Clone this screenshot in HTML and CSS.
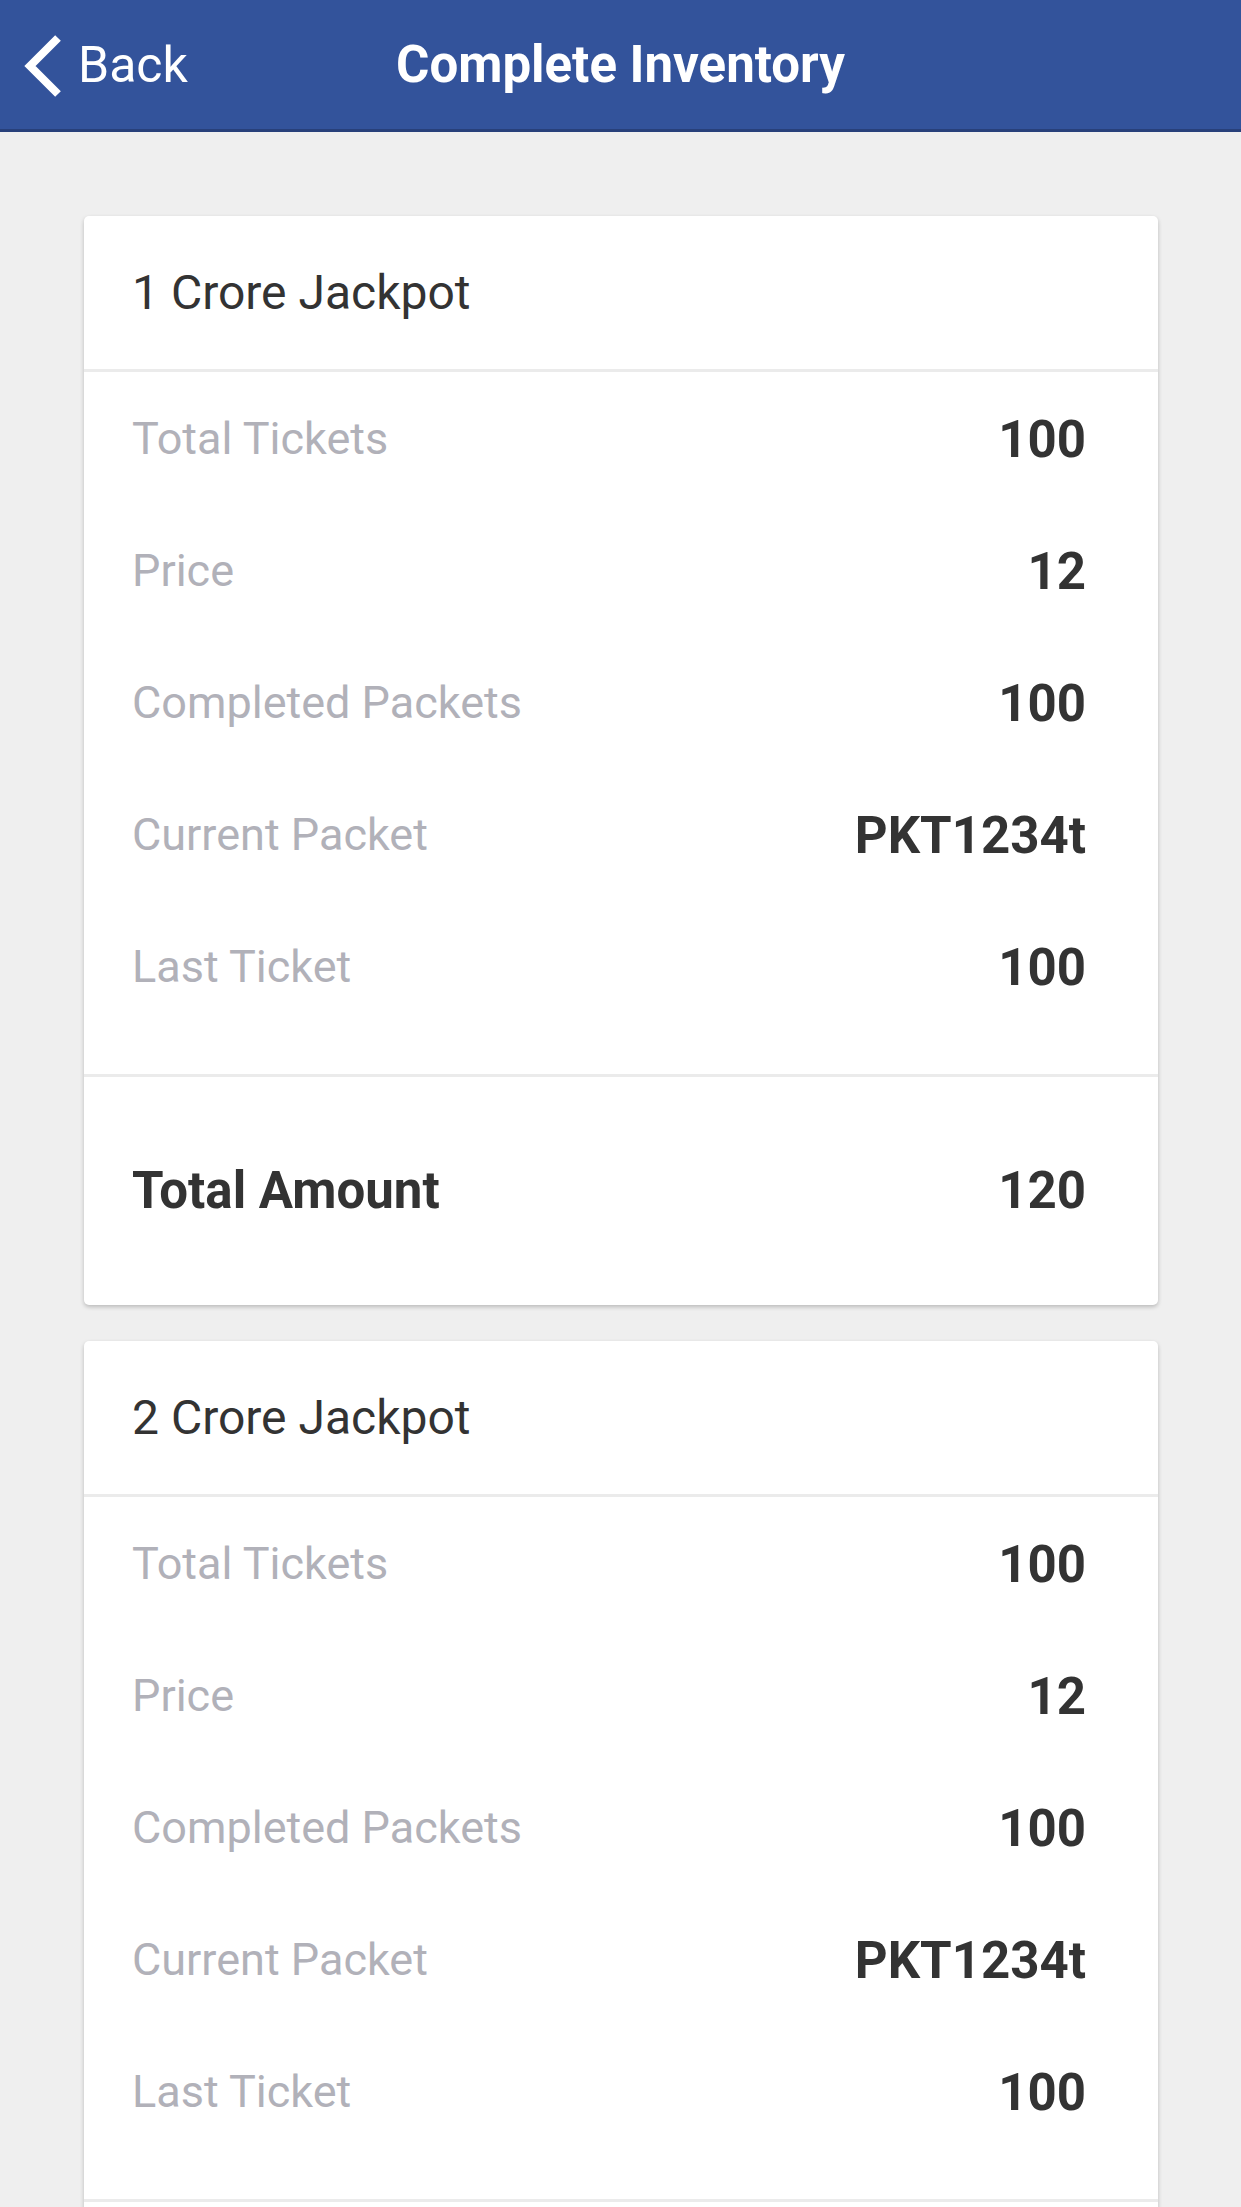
FILE: index.html
```html
<!DOCTYPE html>
<html lang="en">
<head>
<meta charset="utf-8">
<title>Complete Inventory</title>
<link rel="stylesheet" href="styles.css">
</head>
<body>
<header class="topbar">
  <a class="back" href="#">
    <svg class="chev" width="40" height="64" viewBox="0 0 40 64" aria-hidden="true">
      <polyline points="35,4 7,32 35,60" fill="none" stroke="#ffffff" stroke-width="8" stroke-linecap="butt" stroke-linejoin="miter"/>
    </svg>
    <span>Back</span>
  </a>
  <h1 class="title">Complete Inventory</h1>
  <div></div>
</header>

<main class="content">
  <section class="card">
    <div class="card-head">1 Crore Jackpot</div>
    <div class="card-body">
      <div class="row"><span class="label">Total Tickets</span><span class="value">100</span></div>
      <div class="row"><span class="label">Price</span><span class="value">12</span></div>
      <div class="row"><span class="label">Completed Packets</span><span class="value">100</span></div>
      <div class="row"><span class="label">Current Packet</span><span class="value">PKT1234t</span></div>
      <div class="row"><span class="label">Last Ticket</span><span class="value">100</span></div>
    </div>
    <div class="card-foot"><span>Total Amount</span><span>120</span></div>
  </section>

  <section class="card">
    <div class="card-head">2 Crore Jackpot</div>
    <div class="card-body">
      <div class="row"><span class="label">Total Tickets</span><span class="value">100</span></div>
      <div class="row"><span class="label">Price</span><span class="value">12</span></div>
      <div class="row"><span class="label">Completed Packets</span><span class="value">100</span></div>
      <div class="row"><span class="label">Current Packet</span><span class="value">PKT1234t</span></div>
      <div class="row"><span class="label">Last Ticket</span><span class="value">100</span></div>
    </div>
    <div class="card-foot"><span>Total Amount</span><span>120</span></div>
  </section>
</main>
</body>
</html>
```

FILE: styles.css
```css
* { box-sizing: border-box; }

html, body {
  margin: 0;
  padding: 0;
}

body {
  background: #efefef;
  font-family: Roboto, "Liberation Sans", Arial, sans-serif;
  color: #333333;
}

.topbar {
  height: 132px;
  background: #33539b;
  border-bottom: 3px solid #28407a;
  display: grid;
  grid-template-columns: 1fr auto 1fr;
  align-items: center;
}

.back {
  display: flex;
  align-items: center;
  color: #ffffff;
  text-decoration: none;
  font-size: 50px;
  line-height: 60px;
  padding-left: 23px;
}

.chev {
  display: block;
  margin-right: 15px;
  margin-top: 2px;
}

.title {
  margin: 0;
  color: #ffffff;
  font-size: 51px;
  font-weight: 700;
  line-height: 60px;
}

.content {
  padding: 84px 83px 0 84px;
  display: flex;
  flex-direction: column;
  gap: 36px;
}

.card {
  background: #ffffff;
  border-radius: 5px;
  box-shadow: 0 2px 4px rgba(0, 0, 0, 0.22);
}

.card-head {
  font-size: 48px;
  line-height: 57px;
  padding: 48px 48px;
  border-bottom: 3px solid #ebebeb;
  color: #333333;
}

.card-body {
  padding: 0 72px 42px 48px;
  border-bottom: 3px solid #ebebeb;
}

.row {
  height: 132px;
  display: flex;
  align-items: center;
  justify-content: space-between;
}

.label {
  font-size: 45px;
  color: #b1b1b9;
}

.value {
  font-size: 51px;
  font-weight: 700;
  color: #333333;
  padding-top: 2px;
}

.card-foot {
  display: flex;
  justify-content: space-between;
  align-items: center;
  padding: 84px 72px 84px 48px;
  font-size: 51px;
  line-height: 60px;
  font-weight: 700;
  color: #333333;
}
```
